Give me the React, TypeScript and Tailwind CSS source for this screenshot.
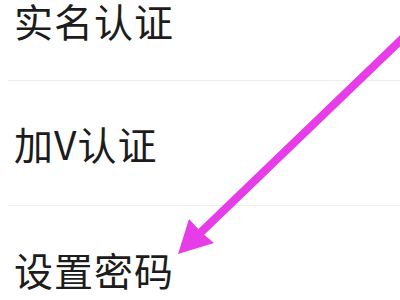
const rows = [
  { label: '实名认证', cls: 'h-[80px] items-start pt-[1px]' },
  { label: '加V认证', cls: 'h-[124px] items-center' },
  { label: '设置密码', cls: 'h-[124px] items-center pt-[3px]' },
];

const Arrow = () => (
  <svg className="absolute inset-0 pointer-events-none" width="400" height="300" viewBox="0 0 400 300">
    <line x1="404" y1="37" x2="196" y2="237" stroke="#e63de8" strokeWidth="8" strokeLinecap="round" />
    <polygon points="178,254 189,219 201,232 214,243" fill="#e63de8" />
  </svg>
);

export default function App() {
  return (
    <div className="relative w-[400px] h-[300px] overflow-hidden bg-white text-[#1c1c1c]" style={{ fontFamily: '"Noto Sans CJK SC", "Noto Sans", sans-serif' }}>
      <div className="flex flex-col">
        {rows.map((row, i) => (
          <div key={row.label} className="flex flex-col">
            <div className={`flex pl-[14px] text-[39px] leading-none tracking-[1px] ${row.cls}`}>
              {row.label}
            </div>
            {i < rows.length - 1 && <div className="ml-2 h-px bg-[#eeeeee]" />}
          </div>
        ))}
      </div>
      <Arrow />
    </div>
  );
}
